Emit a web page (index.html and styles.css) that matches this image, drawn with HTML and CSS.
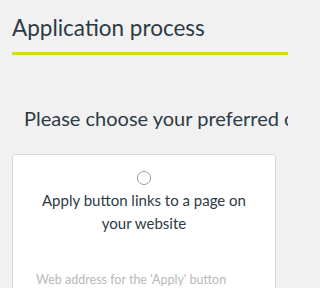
FILE: index.html
```html
<!DOCTYPE html>
<html>
<head>
<meta charset="utf-8">
<link rel="stylesheet" href="styles.css">
</head>
<body>
<div class="page">
  <h1 class="title">Application process</h1>
  <p class="prompt">Please choose your preferred option</p>
  <div class="card">
    <span class="radio"></span>
    <p class="card-label">Apply button links to a page on your website</p>
    <p class="field-label">Web address for the 'Apply' button</p>
  </div>
</div>
</body>
</html>
```
FILE: styles.css
```css
html, body {
  margin: 0;
  padding: 0;
  background: #f1f1f1;
  overflow: hidden;
}
.page {
  width: 288px;
  height: 288px;
  overflow: hidden;
  padding-left: 12px;
  box-sizing: border-box;
  font-family: Lato, "Noto Sans", sans-serif;
  color: #2d3a45;
}
.title {
  margin: 0;
  padding-top: 13px;
  padding-bottom: 9px;
  font-size: 22.5px;
  line-height: 30px;
  font-weight: 400;
  border-bottom: 3px solid #cfdc1c;
  white-space: nowrap;
}
.prompt {
  margin: 50px 0 0 12px;
  font-size: 20px;
  line-height: 26px;
  white-space: nowrap;
}
.card {
  margin-top: 23px;
  width: 264px;
  box-sizing: border-box;
  background: #fff;
  border: 1px solid #d8d8d8;
  border-radius: 3px;
  height: 200px;
  display: flex;
  flex-direction: column;
  align-items: center;
  padding-top: 16px;
}
.radio {
  width: 12px;
  height: 12px;
  border: 1px solid #9a9a9a;
  border-radius: 50%;
}
.card-label {
  margin: 4px 0 0;
  width: 220px;
  text-align: center;
  font-size: 15px;
  line-height: 23px;
}
.field-label {
  align-self: flex-start;
  margin: 37px 0 0 23px;
  font-size: 12.5px;
  color: #b9b9b9;
}
```
